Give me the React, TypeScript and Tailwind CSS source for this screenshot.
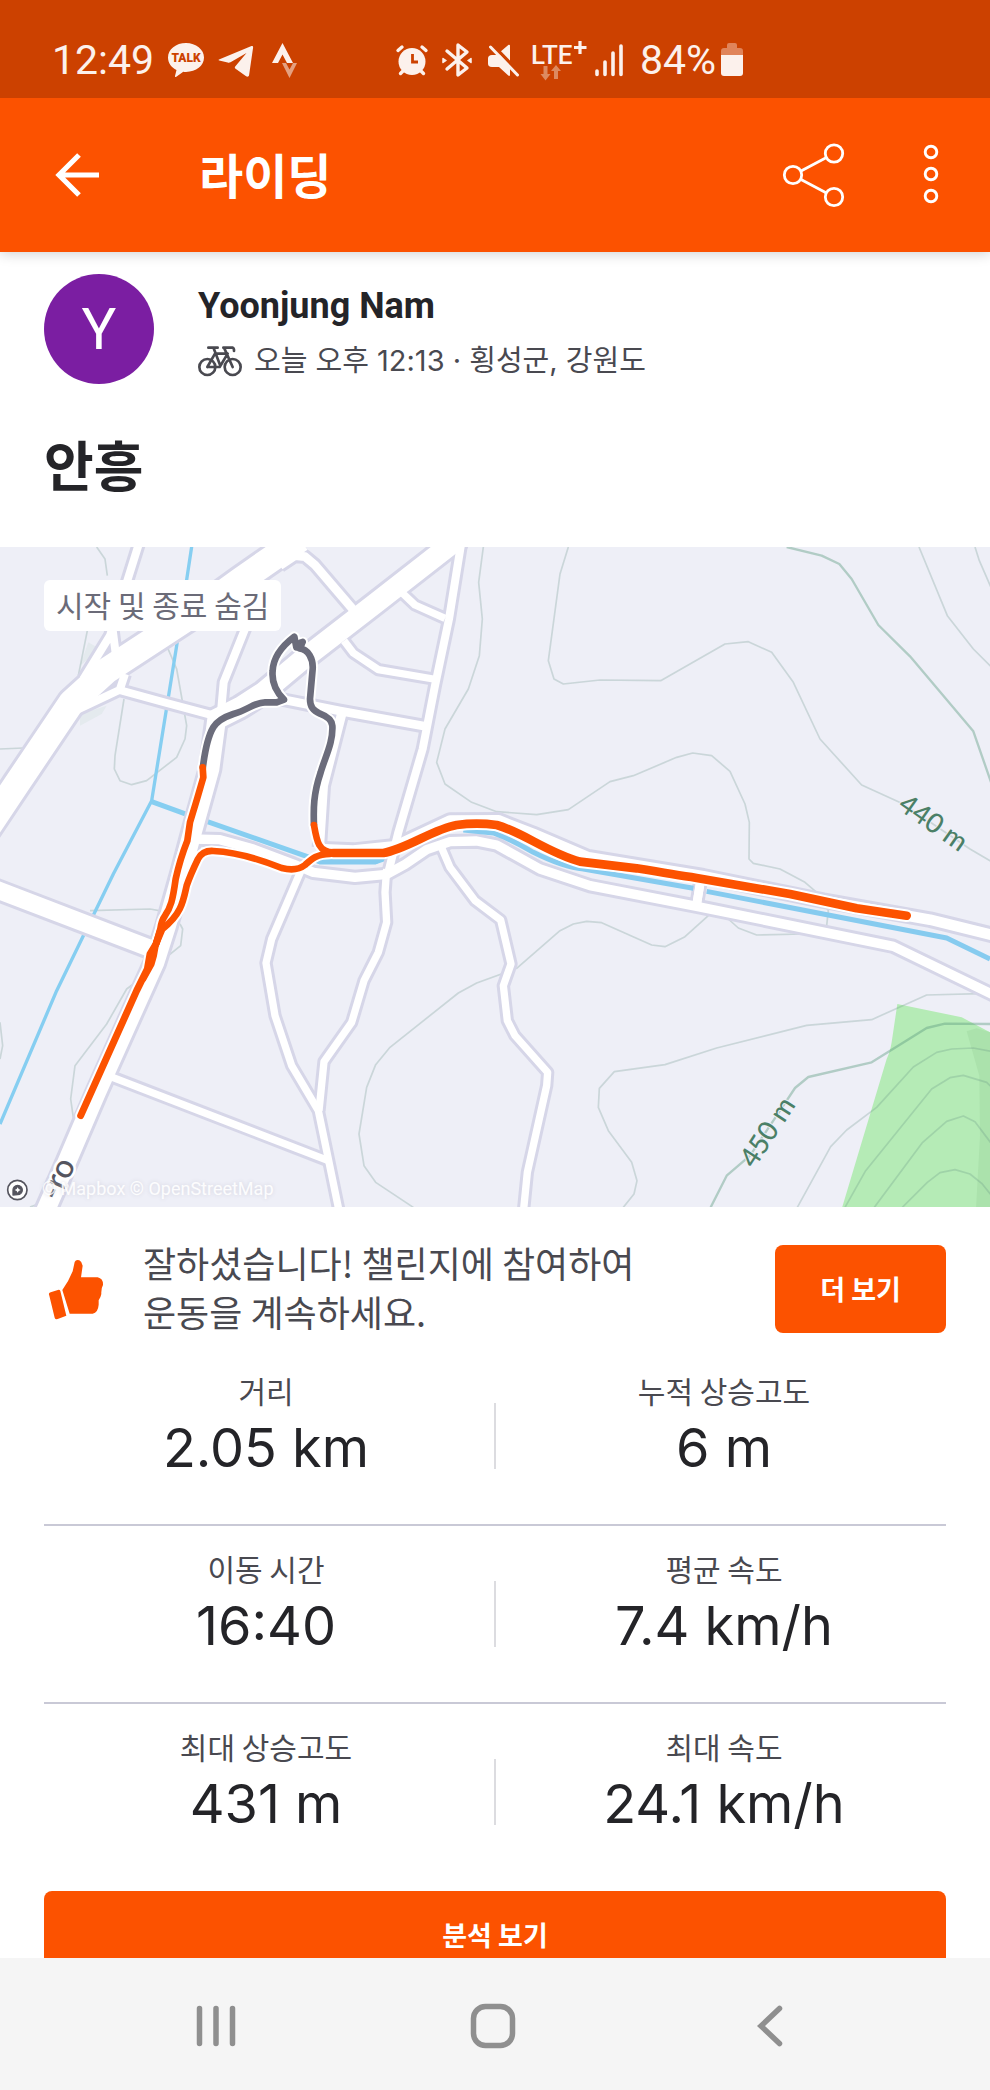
import React from "react";

const SANS = "font-['Inter','Noto_Sans_CJK_KR',sans-serif]";
const KOREAN = "font-['Noto_Sans_CJK_KR',sans-serif]";
const ROBOTO = "font-['Roboto',sans-serif]";

function StatusBar() {
  return (
    <div className={`flex h-[98px] shrink-0 items-center bg-[#cc4100] pl-[52px] pt-[22px] text-[#fcf1ec] ${ROBOTO}`}>
      <div className="flex items-center gap-[14px]">
        <span className="w-[102px] text-[41px] leading-[41px]">12:49</span>
        <svg className="h-9 w-9" viewBox="0 0 36 36" fill="currentColor" role="img" aria-label="KakaoTalk">
          <path d="M18 1C8 1 0 7.300 0 15.600c0 5.600 3.500 10 8.500 12.400L7 34c-.2.900.7 1.200 1.300.7l7-4.900c.9.100 1.800.2 2.700.2 10 0 18-6.200 18-14.400S28 1 18 1z" />
          <text x="18" y="20" textAnchor="middle" fontSize="12" fontWeight="900" fill="#cc4100">TALK</text>
        </svg>
        <svg className="h-9 w-9" viewBox="0 0 36 36" fill="currentColor" aria-hidden="true">
          <path d="M1 17.600 33.500 4.100c1-.4 1.800.2 1.600 1.400l-4 27.500c-.2 1.600-1.700 2.200-3 1.200l-10.500-7.500c-1-.8-1-1.600-.2-2.500L28.500 11 12.500 20.300c-1 .5-1.800.6-2.800.3l-8.500-2c-.8-.2-.8-.7-.2-1z" />
        </svg>
        <svg className="h-9 w-9" viewBox="0 0 36 36" aria-hidden="true">
          <path d="M14.500 1 4 21h6l4.500-8.500L19 21h6z" fill="currentColor" />
          <path d="M14 21h4l3.500 6.500L25 21h4l-7.500 15z" fill="#e4a080" />
        </svg>
      </div>
      <div className="ml-[90px] flex items-center gap-[9px]">
        <svg className="h-9 w-9" viewBox="0 0 36 36" fill="none" stroke="currentColor" strokeLinecap="round" aria-hidden="true">
          <circle cx="18" cy="19.500" r="13.500" fill="currentColor" stroke="none" />
          <path d="M4 8.500 8 5M32 8.500 28 5M6.500 31.500l4-4M29.500 31.500l-4-4" strokeWidth="3.400" />
          <path d="M18.500 12v8h5.500" stroke="#cc4100" strokeWidth="2.800" strokeLinecap="butt" />
        </svg>
        <svg className="h-9 w-9" viewBox="0 0 36 36" fill="none" stroke="currentColor" strokeWidth="3.400" strokeLinecap="round" strokeLinejoin="round" aria-hidden="true">
          <path d="m8 9 20 17-9 7V3l9 7L8 27" />
          <path d="m4 16.500 3 2-3 2zM32 16.500l-3 2 3 2z" fill="currentColor" strokeWidth="1.500" />
        </svg>
        <svg className="h-9 w-9" viewBox="0 0 36 36" fill="currentColor" aria-hidden="true">
          <path d="M8 13h8L26 24v9c0 1-1 1.300-1.700.6L15 25H8c-3 0-4-1.500-4-3.500v-5C4 14.200 5.500 13 8 13z" />
          <path d="M15.500 10.500 24.300 3c.8-.7 1.700-.3 1.700.6V22z" />
          <path d="m8 2 19 19.800" stroke="#cc4100" strokeWidth="3" />
          <path d="m6.500 5 27 28" stroke="currentColor" strokeWidth="3" strokeLinecap="round" />
        </svg>
        <svg className="h-[42px] w-14" viewBox="0 0 56 42" overflow="visible" aria-hidden="true">
          <text x="2" y="25" fontFamily="Roboto" fontSize="26" fontWeight="500" fill="currentColor">LTE</text>
          <path d="M45 8.500h12.500M51 2v13" stroke="currentColor" strokeWidth="3.200" />
          <path d="M16.500 27v11M27 40V30" stroke="#dd8a60" strokeWidth="4" />
          <path d="m11.500 35 5 6.500 5-6.500zM22 32l5-6 5 6z" fill="#dd8a60" />
        </svg>
        <svg className="h-9 w-[30px]" viewBox="0 0 30 36" stroke="currentColor" strokeWidth="3.600" strokeLinecap="round" aria-hidden="true">
          <path d="M3 29v3.500M11 20v12.500M19 11v21.500M27 4v28.500" />
        </svg>
        <span className="ml-[7px] text-[41px] leading-[41px]">84%</span>
        <svg className="-ml-[5px] h-9 w-6" viewBox="0 0 24 36" aria-hidden="true">
          <path d="M7 3q0-2 2-2h6q2 0 2 2v3h3q3 0 3 3v5H1V9q0-3 3-3h3z" fill="#e0845a" />
          <path d="M1 13h22v18q0 3-3 3H4q-3 0-3-3z" fill="currentColor" />
        </svg>
      </div>
    </div>
  );
}

function AppBar() {
  return (
    <header className="relative z-10 flex h-[154px] shrink-0 items-center bg-[#fc5200] pl-[55px] pr-[49px] text-white shadow-[0_2px_12px_rgba(0,0,0,0.18)] [clip-path:inset(0_0_-24px_0)]">
      <button type="button" aria-label="뒤로" className="h-11 w-11">
        <svg className="h-11 w-11" viewBox="0 0 44 44" fill="none" stroke="currentColor" strokeWidth="5.200" aria-hidden="true">
          <path d="M44 22H5M24 2 4 22l20 20" />
        </svg>
      </button>
      <h1 className={`ml-[100px] flex-1 pb-1 text-[48px] font-bold leading-[60px] ${KOREAN}`}>라이딩</h1>
      <button type="button" aria-label="공유" className="h-16 w-16">
        <svg className="h-16 w-16" viewBox="0 0 64 64" fill="none" stroke="currentColor" strokeWidth="2.800" overflow="visible" aria-hidden="true">
          <circle cx="13" cy="32" r="8.700" />
          <circle cx="54" cy="10.500" r="8.700" />
          <circle cx="54" cy="54" r="8.700" />
          <path d="m21 28 25.500-13.500M21 36.500 46.500 50" />
        </svg>
      </button>
      <button type="button" aria-label="더보기 메뉴" className="ml-[77px] h-16 w-5">
        <svg className="h-16 w-5" viewBox="0 0 20 64" fill="none" stroke="currentColor" strokeWidth="2.900" aria-hidden="true">
          <circle cx="10" cy="9" r="5.800" />
          <circle cx="10" cy="31" r="5.800" />
          <circle cx="10" cy="53" r="5.800" />
        </svg>
      </button>
    </header>
  );
}

function BikeIcon() {
  return (
    <svg className="h-8 w-11 shrink-0" viewBox="54 228 132 96" fill="none" stroke="#494950" strokeWidth="8" strokeLinejoin="round" strokeLinecap="round" aria-hidden="true">
      <circle cx="82" cy="294" r="24" />
      <circle cx="158" cy="294" r="24" />
      <path d="M85 236h28M101 238l20 52M82 294l23-40h34M82 294h37l24-40M132 236l26 58M130 236h28q5 3 4 10" />
    </svg>
  );
}

function Athlete() {
  return (
    <section className="px-11 pt-[22px]">
      <div className="flex">
        <div className={`flex h-[110px] w-[110px] shrink-0 items-center justify-center rounded-full bg-[#7b1ea2] text-[58px] text-white ${ROBOTO}`}>Y</div>
        <div className="ml-11 min-w-0 pt-2">
          <p className={`text-[36px] font-bold leading-[48px] text-[#242428] ${ROBOTO}`}>Yoonjung Nam</p>
          <p className={`mt-[9px] flex items-center gap-3 text-[29px] leading-[44px] text-[#494950] ${SANS}`}>
            <BikeIcon />
            <span>오늘 오후 12:13 · 횡성군, 강원도</span>
          </p>
        </div>
      </div>
      <h2 className={`mt-[41px] pb-11 text-[54px] font-bold leading-[78px] text-[#242428] ${KOREAN}`}>안흥</h2>
    </section>
  );
}

type Road = { d: string; w: number };

const ROADS: Road[] = [
  { d: "M418 10 385 115 330 290 250 420M335 250 348 350", w: 24 },
  { d: "M780 130 735 270 671 430 662 530", w: 24 },
  { d: "M215 520 358 453 500 492 650 532M360 450 375 405", w: 24 },
  { d: "M840 80 885 50 915 53 945 78 1062 215", w: 26 },
  { d: "M1384 10 1347 240 1305 440 1268 630 1195 880 1165 1000", w: 24 },
  { d: "M1205 160 1245 198 1335 238", w: 22 },
  { d: "M1032 305 1060 342 1135 392 1300 420", w: 22 },
  { d: "M830 478 1020 516 1275 562", w: 26 },
  { d: "M1025 525 970 740 958 925", w: 28 },
  { d: "M905 990 815 1200 798 1272 825 1430 875 1580 955 1715 985 1860 1018 2020", w: 22 },
  { d: "M1160 990 1155 1060 1160 1150 1135 1240 1092 1325 1055 1450 972 1568 957 1715", w: 22 },
  { d: "M330 1612 985 1865", w: 22 },
  { d: "M1320 915 1350 985 1425 1085 1502 1143 1533 1275 1510 1340 1522 1445 1545 1490 1643 1600 1640 1640 1582 1900 1570 2020", w: 22 },
  { d: "M2103 1015 2090 1098", w: 26 },
  { d: "M570 900 660 902 760 930 880 975 940 1000 1065 1015 1160 1006 1215 976 1280 932 1350 908 1430 906 1490 918 1620 990 1770 1040 2090 1102 2680 1222 2985 1370", w: 28 },
  { d: "M955 930 1060 935 1185 922 1350 845 1495 844 1600 885 1765 955 2110 1012 2470 1085 2790 1142 2985 1190", w: 32 },
  { d: "M-20 1048 455 1230", w: 52 },
  { d: "M1380 -5 1130 190 900 368 790 460 720 505 640 545", w: 62 },
  { d: "M650 540 630 690 580 870 545 1000 500 1160 465 1270 290 1660 200 1870 130 2030", w: 56 },
  { d: "M-60 900 50 735 215 490 320 395 600 212 720 125 900 0", w: 78 },
];

const CONTOURS = [
  "M290 24 315 60 322 110M262 275 235 410M500 320 530 390 560 560 555 600 530 655 440 725 395 737 360 725 343 690 345 650 372 480M0 630 70 627",
  "M1450 24 1436 130 1447 240 1438 350 1405 450 1335 570 1310 670 1335 735 1415 790 1490 818 1610 827 1705 812 1830 728 1900 710 2030 655 2078 642 2135 650 2190 697 2235 795 2248 850 2247 960 2260 973 2340 990 2415 1030 2450 1060 2485 1115 2480 1160",
  "M1705 24 1680 105 1645 365 1662 420 1690 435 1800 423 1982 425 2175 315 2245 308 2315 340 2380 430 2460 600 2585 738 2710 795 2910 930 2975 968",
  "M2757 24 2842 230 2920 330 2975 385M2925 24 2938 65 2975 150",
  "M270 1115 450 1110 490 1117M540 1155 548 1170 542 1220 505 1250M400 1335 380 1350 320 1455 225 1580 212 1680 222 1750M0 1450 8 1520 0 1560M90 2004 130 1990",
  "M1240 2005 1127 1930 1092 1880 1077 1785 1100 1645 1127 1577 1170 1525 1375 1362 1430 1332 1550 1288 1680 1175 1720 1155 1760 1147 1805 1151 1955 1218 1995 1223 2055 1193 2125 1130M2185 1140 2215 1167 2270 1188 2410 1185",
  "M1870 2005 1902 1965 1911 1925 1895 1870 1825 1775 1795 1705 1798 1648 1843 1598 1995 1577 2150 1527 2420 1459 2615 1442 2780 1368 2975 1363",
  "M2392 2005 2492 1823 2540 1773 2630 1705 2740 1584 2810 1540 2855 1530 2920 1527 2975 1537",
  "M2535 2005 2597 1895 2795 1650 2850 1616 2890 1609 2960 1630 2975 1645",
  "M2623 2005 2768 1810 2840 1747 2890 1731 2925 1748 2975 1815",
  "M2707 2005 2782 1930 2820 1901 2865 1892 2910 1905 2945 1933 2975 1970",
];

const INDEX_CONTOURS = [
  "M2360 24 2465 50 2518 75 2555 120 2635 258 2730 352 2920 577 2975 735",
  "M2132 2005 2180 1910 2250 1850 2350 1700 2385 1647 2425 1614 2615 1570 2780 1467 2835 1454 2975 1455",
];

const HIDDEN_TRACK =
  "M608 690C614 640 622 595 640 565Q655 540 700 525C745 512 765 490 795 490H830L852 482C825 455 815 425 818 395C820 355 845 322 883 293L889 325 908 309 898 328C925 330 940 360 938 390L930 480C930 505 940 515 960 524Q995 537 997 560C1000 610 975 655 962 700C940 765 940 810 942 860";

const TRACKS: Road[] = [
  { d: "M608 685 610 715Q590 785 570 850L562 905Q540 960 527 1020C518 1085 512 1105 495 1130Q484 1145 481 1170L468 1215", w: 20 },
  { d: "M942 858C950 905 955 940 1000 940M990 945C950 945 935 960 915 978Q890 998 845 987C790 965 720 940 640 936Q608 934 594 960Q570 1010 560 1040C550 1085 545 1125 487 1170L468 1215", w: 20 },
  { d: "M481 1175 468 1215 450 1245 442 1290 410 1355 242 1730", w: 21 },
  { d: "M470 1205 462 1250 455 1275 430 1320", w: 18 },
  { d: "M1000 942H1150C1220 930 1300 870 1370 858Q1430 850 1490 858C1570 880 1640 940 1740 968L1910 988Q2030 1008 2090 1017L2370 1065 2570 1108 2720 1130", w: 26 },
];

const RIVERS: Road[] = [
  { d: "M577 10 530 320 455 785 340 1005 170 1355 0 1755", w: 10 },
  { d: "M453 787 560 826 920 952 960 967H1130L1180 950", w: 15 },
];

function RideMap() {
  return (
    <section className="relative overflow-hidden">
      <svg className="block h-auto w-full bg-[#eeeff7]" viewBox="0 24 2970 1980" fill="none" strokeLinejoin="round" role="img" aria-label="경로 지도">
        <path d="M2692 1395 2885 1435 2970 1480V2010H2525L2660 1560Q2670 1540 2675 1510Z" fill="#b5ebb6" />
        <path d="M2900 1477 2930 1468 2970 1480V2010H2928L2940 1790 2938 1610Z" fill="#abe2ac" />
        <path d="M240 560V525L320 500 305 525Z M240 380 265 310 300 330Z" fill="#e4eaee" />
        {CONTOURS.map((d) => (
          <path key={d} d={d} stroke="#5e8a80" strokeOpacity="0.25" strokeWidth="5" />
        ))}
        {INDEX_CONTOURS.map((d) => (
          <path key={d} d={d} stroke="#5e9a80" strokeOpacity="0.42" strokeWidth="7" />
        ))}
        {RIVERS.map((r) => (
          <path key={r.d} d={r.d} stroke="#86cef1" strokeWidth={r.w} />
        ))}
        {ROADS.map((r) => (
          <path key={r.d} d={r.d} stroke="#d6d6e8" strokeWidth={r.w + 18} />
        ))}
        {ROADS.map((r) => (
          <path key={r.d} d={r.d} stroke="#fff" strokeWidth={r.w} />
        ))}
        <path d="M930 957 960 969H1125L1150 955M1390 873 1480 882Q1530 900 1600 940 1690 985 1750 990L2080 1048M2120 1057 2840 1197 2970 1260" stroke="#86cbef" strokeWidth="15" />
        <path d="M2103 1020 2090 1095" stroke="#fff" strokeWidth="26" />
        <g stroke="#fff" strokeLinecap="round">
          <path d={HIDDEN_TRACK} strokeWidth="32" />
          {TRACKS.map((r) => (
            <path key={r.d} d={r.d} strokeWidth={r.w + 12} />
          ))}
        </g>
        <path d={HIDDEN_TRACK} stroke="#6b6c7b" strokeWidth="20" />
        <circle cx="903" cy="313" r="12" fill="#6b6c7b" />
        <g stroke="#fc5200" strokeLinecap="round">
          {TRACKS.map((r) => (
            <path key={r.d} d={r.d} strokeWidth={r.w} />
          ))}
        </g>
        <g fontFamily="Lato, sans-serif" fontSize="82" fontWeight="500" stroke="#eeeff7" strokeWidth="6" paintOrder="stroke" textAnchor="middle">
          <text transform="translate(2784 874) rotate(35)" fill="#4b8067">440 m</text>
          <text transform="translate(2326 1794) rotate(-57)" fill="#4b8067">450 m</text>
          <text transform="translate(228 1875) rotate(-66)" fill="#55555f" stroke="#fff" strokeWidth="16" fontSize="98" textAnchor="end">-ro</text>
        </g>
        <g stroke="#55555f">
          <circle cx="52" cy="1953" r="29" fill="#fff" strokeWidth="5" />
          <path d="M39 1968V1953A14 14 0 1 1 53 1967Z" fill="#55555f" strokeWidth="4" />
          <path d="m53 1945 3 5 6 3-6 3-3 5-3-5-6-3 6-3z" fill="#fff" stroke="none" />
        </g>
      </svg>
      <span className={`absolute left-11 top-[33px] rounded-md bg-white px-3 pb-[2px] text-[30px] leading-[49px] text-[#6b6b78] ${KOREAN}`}>시작 및 종료 숨김</span>
      <p className={`absolute bottom-[7px] left-[42px] text-[18px] leading-[22px] text-white/90 [text-shadow:0_0_4px_#d0d0dc] ${ROBOTO}`}>© Mapbox © OpenStreetMap</p>
    </section>
  );
}

function ChallengePrompt() {
  return (
    <section className="flex items-center px-11 pt-[31px]">
      <svg className="ml-1 h-[61px] w-14 shrink-0" viewBox="56 60 168 183" fill="#fc5200" aria-hidden="true">
        <path d="M99 153q20-28 31-56l6-28q4-9 14-5 9 5 10 16l-5 35h50q17 4 16 23-6 10-5 27-2 11-8 19v13q-2 24-18 27h-69z" />
        <path d="M60 170q-4-7 4-10l24-8q4 0 5 4l18 74-26 10q-7 2-9-4z" />
      </svg>
      <p className={`ml-[39px] w-[520px] pb-1 text-[36px] leading-[49px] text-[#494950] ${KOREAN}`}>잘하셨습니다! 챌린지에 참여하여 운동을 계속하세요.</p>
      <button type="button" className={`ml-auto h-[88px] w-[171px] shrink-0 rounded-lg bg-[#fc5200] text-[27px] font-bold text-white ${KOREAN}`}>더 보기</button>
    </section>
  );
}

function Stat({ label, value }: { label: string; value: string }) {
  return (
    <div className="pb-[46px] pt-6 text-center first:pr-[6px] last:pl-[6px]">
      <dt className={`text-[30px] leading-[36px] text-[#494950] ${KOREAN}`}>{label}</dt>
      <dd className="mt-[10px] font-['Inter',sans-serif] text-[54px] leading-[60px] text-[#242428]">{value}</dd>
    </div>
  );
}

const STATS = [
  [["거리", "2.05 km"], ["누적 상승고도", "6 m"]],
  [["이동 시간", "16:40"], ["평균 속도", "7.4 km/h"]],
  [["최대 상승고도", "431 m"], ["최대 속도", "24.1 km/h"]],
];

function Stats() {
  return (
    <section className="mt-2 px-11">
      {STATS.map(([left, right]) => (
        <dl key={left[0]} className="grid grid-cols-[1fr_2px_1fr] border-b-2 border-[#c9c9d6] last:border-white">
          <Stat label={left[0]} value={left[1]} />
          <div className="h-[66px] self-center bg-[#dcdce0]" />
          <Stat label={right[0]} value={right[1]} />
        </dl>
      ))}
    </section>
  );
}

function SystemNav() {
  return (
    <nav className="grid h-[132px] shrink-0 grid-cols-3 items-center justify-items-center bg-[#f5f5f5] pl-[78px] pr-[82px] pt-1 text-[#8f8f8f]">
      <button type="button" aria-label="최근 앱">
        <svg className="block h-12 w-12" viewBox="0 0 48 48" stroke="currentColor" strokeWidth="5.500" strokeLinecap="round" aria-hidden="true">
          <path d="M7.500 6.500v35M24 6.500v35M40.500 6.500v35" />
        </svg>
      </button>
      <button type="button" aria-label="홈">
        <svg className="block h-12 w-12" viewBox="0 0 48 48" fill="none" stroke="currentColor" strokeWidth="5.500" aria-hidden="true">
          <rect x="4.500" y="4.500" width="39" height="39" rx="12" />
        </svg>
      </button>
      <button type="button" aria-label="이전">
        <svg className="block h-12 w-12" viewBox="0 0 48 48" fill="none" stroke="currentColor" strokeWidth="5.500" strokeLinecap="round" strokeLinejoin="miter" aria-hidden="true">
          <path d="M33.500 6.500 15 24l18.500 17.500" />
        </svg>
      </button>
    </nav>
  );
}

export default function App() {
  return (
    <div className="flex h-screen flex-col overflow-hidden bg-white">
      <StatusBar />
      <AppBar />
      <main className="min-h-0 flex-1 overflow-y-auto [scrollbar-width:none]">
        <Athlete />
        <RideMap />
        <ChallengePrompt />
        <Stats />
        <div className="px-11 pb-11 pt-[9px]">
          <button type="button" className={`h-[88px] w-full rounded-lg bg-[#fc5200] text-[27px] font-bold text-white ${KOREAN}`}>분석 보기</button>
        </div>
      </main>
      <SystemNav />
    </div>
  );
}
